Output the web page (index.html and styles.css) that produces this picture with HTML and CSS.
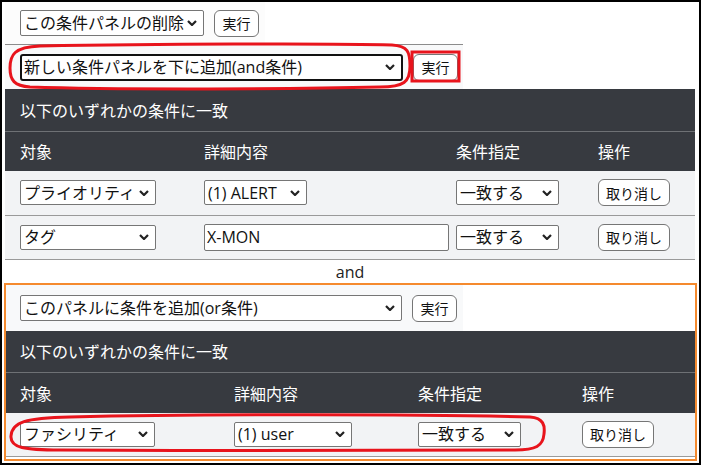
FILE: index.html
```html
<!DOCTYPE html>
<html lang="ja">

<head>
  <meta charset="UTF-8" />
  <meta name="viewport" content="width=device-width, initial-scale=1.0" />
  <title>条件パネル</title>
  <link rel="stylesheet" href="styles.css">
</head>

<body>
  <div class="frame">
    <!-- 1つ目の条件パネル -->
    <div class="panel">
      <div class="bar bar-top">
        <select class="sel sel-del">
          <option>この条件パネルの削除</option>
        </select>
        <button class="btn">実行</button>
      </div>
      <div class="bar bar-add">
        <select class="sel sel-add">
          <option>新しい条件パネルを下に追加(and条件)</option>
        </select>
        <button class="btn">実行</button>
      </div>
      <table class="cond cond-1">
        <colgroup>
          <col class="c1">
          <col class="c2">
          <col class="c3">
          <col>
        </colgroup>
        <thead>
          <tr class="cond-title">
            <th colspan="4">以下のいずれかの条件に一致</th>
          </tr>
          <tr class="cond-head">
            <th>対象</th>
            <th>詳細内容</th>
            <th>条件指定</th>
            <th>操作</th>
          </tr>
        </thead>
        <tbody>
          <tr>
            <td><select class="sel w-target"><option>プライオリティ</option></select></td>
            <td><select class="sel w-detail"><option>(1) ALERT</option></select></td>
            <td><select class="sel w-match"><option>一致する</option></select></td>
            <td><button class="btn btn-cancel">取り消し</button></td>
          </tr>
          <tr>
            <td><select class="sel w-target"><option>タグ</option></select></td>
            <td><input class="txt" type="text" value="X-MON"></td>
            <td><select class="sel w-match"><option>一致する</option></select></td>
            <td><button class="btn btn-cancel">取り消し</button></td>
          </tr>
        </tbody>
      </table>
    </div>

    <div class="and">and</div>

    <!-- 2つ目の条件パネル -->
    <div class="panel panel-or">
      <div class="bar bar-or">
        <select class="sel sel-or">
          <option>このパネルに条件を追加(or条件)</option>
        </select>
        <button class="btn">実行</button>
      </div>
      <table class="cond cond-2">
        <colgroup>
          <col class="c1">
          <col class="c2">
          <col class="c3">
          <col>
        </colgroup>
        <thead>
          <tr class="cond-title">
            <th colspan="4">以下のいずれかの条件に一致</th>
          </tr>
          <tr class="cond-head">
            <th>対象</th>
            <th>詳細内容</th>
            <th>条件指定</th>
            <th>操作</th>
          </tr>
        </thead>
        <tbody>
          <tr>
            <td><select class="sel w-target2"><option>ファシリティ</option></select></td>
            <td><select class="sel w-user"><option>(1) user</option></select></td>
            <td><select class="sel w-match"><option>一致する</option></select></td>
            <td><button class="btn btn-cancel">取り消し</button></td>
          </tr>
        </tbody>
      </table>
    </div>

    <!-- 赤い注釈 -->
    <svg class="marks" width="701" height="465" viewBox="0 0 701 465">
      <path d="M40 46 C150 44 330 43 392 45 C408 46 410 52 410 66 C410 82 404 87 380 87 C300 89 120 90 30 87 C14 86 10 80 10 68 C10 55 14 47 40 46 Z" />
      <rect x="412" y="52" width="47" height="29" />
      <path d="M70 417 C200 414 420 414 530 417 C544 418 545 426 544 434 C543 446 536 450 515 450 C400 451 220 451 60 450 C25 450 10 448 11 436 C12 422 25 418 70 417 Z" />
    </svg>
  </div>
</body>

</html>
```

FILE: styles.css
```css
* {
  box-sizing: border-box;
}

body {
  margin: 0;
  font-family: "Open Sans", "Noto Sans CJK JP", sans-serif;
  color: #212529;
}

.frame {
  position: relative;
  width: 701px;
  height: 465px;
  padding: 0 4px 0 3px;
  border: 2px solid #000;
  background: #fff;
  overflow: hidden;
}

.bar {
  display: flex;
  align-items: center;
  gap: 10px;
}

.bar-top {
  width: 260px;
  height: 42px;
  padding: 0 0 0 15px;
  background: #fcfcfc;
}

.bar-add {
  width: 458px;
  height: 45px;
  padding: 0 0 0 15px;
  border-top: 1px solid #8c8c8c;
  background: #f8f9fa;
}

.bar-or {
  width: 457px;
  height: 46px;
  padding: 1px 0 0 14px;
  background: #f8f9fa;
}

.sel {
  flex-shrink: 0;
  height: 25px;
  padding: 0 18px 0 3px;
  border: 1px solid #767676;
  border-radius: 2px;
  font-family: inherit;
  font-size: 16px;
  color: #111;
  appearance: none;
  background: #fff url("data:image/svg+xml,%3Csvg xmlns='http://www.w3.org/2000/svg' width='10' height='6' viewBox='0 0 10 6'%3E%3Cpath d='M1 1l4 4 4-4' fill='none' stroke='%23222' stroke-width='2.2'/%3E%3C/svg%3E") no-repeat right 6px center;
}

.sel-del {
  width: 184px;
  height: 26px;
}

.sel-add {
  width: 383px;
  height: 27px;
  border: 2px solid #111;
  border-radius: 3px;
  padding-left: 2px;
}

.sel-or {
  width: 382px;
  height: 26px;
}

.btn {
  flex-shrink: 0;
  width: 45px;
  height: 27px;
  padding: 0;
  border: 1px solid #767676;
  border-radius: 6px;
  background: #fff;
  font-family: inherit;
  font-size: 14px;
  color: #111;
  white-space: nowrap;
}

.btn-cancel {
  width: 72px;
}

.cond {
  width: 100%;
  border-collapse: collapse;
  table-layout: fixed;
}

.cond th {
  padding: 0 0 0 15px;
  background: #373a40;
  color: #fff;
  font-weight: normal;
  font-size: 16px;
  text-align: left;
}

.cond-title th {
  height: 42px;
  border-bottom: 1px solid #6e7175;
}

.cond-head th {
  height: 40px;
}

.cond td {
  height: 44px;
  padding: 0 0 0 15px;
  background: #f2f3f5;
  border-bottom: 1px solid #9a9a9a;
  vertical-align: middle;
}

.cond-1 .c1 {
  width: 184px;
}

.cond-1 .c2 {
  width: 252px;
}

.cond-1 .c3 {
  width: 142px;
}

.cond-2 th,
.cond-2 td {
  padding-left: 14px;
}

.cond-2 .c1 {
  width: 214px;
}

.cond-2 .c2 {
  width: 184px;
}

.cond-2 .c3 {
  width: 164px;
}

.w-target {
  width: 136px;
}

.w-detail {
  width: 103px;
}

.w-match {
  width: 103px;
}

.w-target2 {
  width: 135px;
}

.w-user {
  width: 118px;
}

.txt {
  width: 245px;
  height: 27px;
  padding: 0 2px;
  border: 1px solid #767676;
  border-radius: 2px;
  font-family: inherit;
  font-size: 16px;
  color: #111;
}

.and {
  height: 23px;
  padding-top: 2px;
  line-height: 21px;
  text-align: center;
  font-size: 16px;
  color: #222;
}

.panel-or {
  height: 178px;
  margin: 0 -2px 0 -1px;
  border: 2px solid #f58a2e;
}

.marks {
  position: absolute;
  left: -2px;
  top: -2px;
  pointer-events: none;
}

.marks path,
.marks rect {
  fill: none;
  stroke: #e8141c;
  stroke-width: 3;
}
```
